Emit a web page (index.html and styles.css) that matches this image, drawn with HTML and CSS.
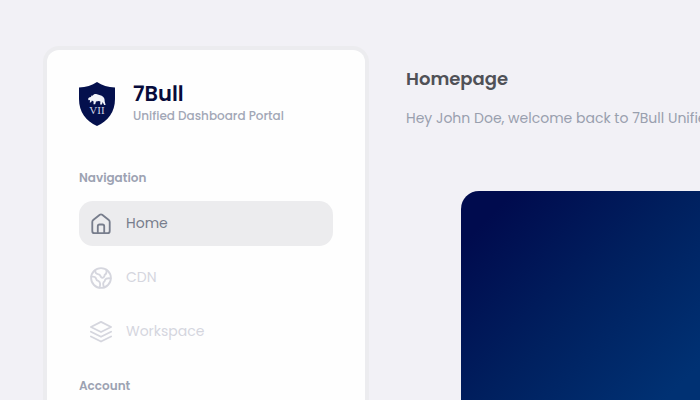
FILE: index.html
```html
<!DOCTYPE html>
<html lang="en">
<head>
<meta charset="utf-8">
<meta name="viewport" content="width=device-width, initial-scale=1">
<title>Homepage</title>
<link rel="stylesheet" href="styles.css">
</head>
<body>
<div class="layout">
  <aside class="sidebar">
    <div class="brand">
      <svg class="brand-logo" viewBox="0 0 36 44" aria-hidden="true">
        <path fill="#04104d" d="M18 0C13 3.600 7 5.200 0 5.500V17c0 13 7 22 18 27 11-5 18-14 18-27V5.500C29 5.200 23 3.600 18 0z"/>
        <path fill="#f1f3f9" d="M10 15.500l1.800-.6L13 13l.6.900c1-1.900 2.700-2.300 4.400-1.600 2 .8 4.500 1 6 2.400 1.500 1.300 1.600 2.600 1.700 4.800l.9 3.500h-1.500l-1.500-3-.6 2.500h-1.900l.3-3-1.600-.4-2.800.5-.8 2.700h-1.700l.1-2.900-1.700-.8-.6 1.400-1.500.8.2-2.800-1.300.2-.7-1.300z"/>
        <text x="18" y="32" class="brand-mark">VII</text>
      </svg>
      <div>
        <div class="brand-name">7Bull</div>
        <div class="brand-tagline">Unified Dashboard Portal</div>
      </div>
    </div>
    <nav class="nav">
      <h2 class="nav-title">Navigation</h2>
      <a class="nav-link nav-link-active" href="#home" aria-current="page">
        <svg class="icon" viewBox="0 0 24 24" aria-hidden="true"><path d="M2.500 9.800Q2.500 8.500 3.500 7.700L10.700 2Q12 1 13.300 2L20.500 7.700Q21.500 8.500 21.500 9.800V19.500Q21.500 22 19 22H5Q2.500 22 2.500 19.500zM8.500 22V14.500Q8.500 12.500 10.500 12.500H13.500Q15.500 12.500 15.500 14.500V22"/></svg>
        <span>Home</span>
      </a>
      <a class="nav-link" href="#cdn">
        <svg class="icon" viewBox="0 0 24 24" aria-hidden="true"><circle cx="12" cy="12" r="10.800"/><path d="M5.500 4Q6 7.500 8.500 7.800T11.500 10Q13 12.500 14.500 11.500T16 8.500Q18.500 7.500 18 3M1.500 10.500Q6 10 6.500 12.500T9.500 15.500Q12 17 10.500 22.500M22.500 12.500Q16.500 11.500 16 15.500 13 17.500 15.500 22"/></svg>
        <span>CDN</span>
      </a>
      <a class="nav-link" href="#workspace">
        <svg class="icon" viewBox="0 0 24 24" aria-hidden="true"><path d="M12 1L23 6.500 12 12 1 6.500zM1 11.700L12 17.200l11-5.500M1 16.900L12 22.400l11-5.500"/></svg>
        <span>Workspace</span>
      </a>
    </nav>
    <nav class="nav">
      <h2 class="nav-title">Account</h2>
    </nav>
  </aside>
  <main class="content">
    <h1 class="page-title">Homepage</h1>
    <p class="welcome">Hey John Doe, welcome back to 7Bull Unified</p>
    <section class="hero" aria-label="Banner"></section>
  </main>
</div>
</body>
</html>
```

FILE: styles.css
```css
* {
  box-sizing: border-box;
}

body {
  margin: 0;
  background: #f2f1f6;
  font-family: Poppins, Inter, "Open Sans", sans-serif;
  font-size: 14px;
}

.layout {
  display: flex;
  gap: 41px;
  min-height: 100vh;
  padding-top: 50px;
  padding-left: 47px;
  overflow: hidden;
}

.sidebar {
  flex: 0 0 318px;
  padding: 32px 32px 0;
  border-radius: 12px 12px 0 0;
  background: #fefefe;
  box-shadow: 0 0 0 4px #ececef;
}

.brand {
  display: flex;
  gap: 18px;
  margin-bottom: 42px;
}

.brand-logo {
  flex: none;
  width: 36px;
  height: 44px;
}

.brand-mark {
  fill: #d3d8e8;
  font-family: "Liberation Serif", serif;
  font-size: 11px;
  text-anchor: middle;
}

.brand-name {
  color: #070b3b;
  font-size: 21px;
  font-weight: 600;
  line-height: 24px;
}

.brand-tagline {
  color: #a2a7b6;
  font-size: 12px;
  font-weight: 500;
  line-height: 20px;
  white-space: nowrap;
}

.nav {
  display: flex;
  flex-direction: column;
  gap: 9px;
}

.nav + .nav {
  margin-top: 22px;
}

.nav-title {
  margin: 0;
  padding-bottom: 4px;
  color: #9ca2b2;
  font-size: 12px;
  font-weight: 600;
  line-height: 20px;
}

.nav-link {
  display: flex;
  align-items: center;
  gap: 14px;
  min-height: 45px;
  padding: 0 11px;
  border-radius: 14px;
  color: #d5d6de;
  text-decoration: none;
}

.nav-link-active {
  background: #ececee;
  color: #777d8c;
}

.icon {
  width: 22px;
  height: 22px;
  fill: none;
  stroke: currentColor;
  stroke-width: 2;
  stroke-linecap: round;
  stroke-linejoin: round;
}

.content {
  display: flex;
  flex: 1;
  flex-direction: column;
  min-width: 0;
  padding-top: 16px;
}

.page-title {
  margin: 0;
  color: #505157;
  font-size: 18px;
  font-weight: 600;
  line-height: 26px;
}

.welcome {
  margin: 16px 0 63px;
  color: #999fae;
  line-height: 20px;
  white-space: nowrap;
}

.hero {
  flex: 1;
  margin-left: 55px;
  border-radius: 18px 0 0;
  background: linear-gradient(135deg, #000b4e 12%, #00205f 52%, #003173 92%);
}
```
